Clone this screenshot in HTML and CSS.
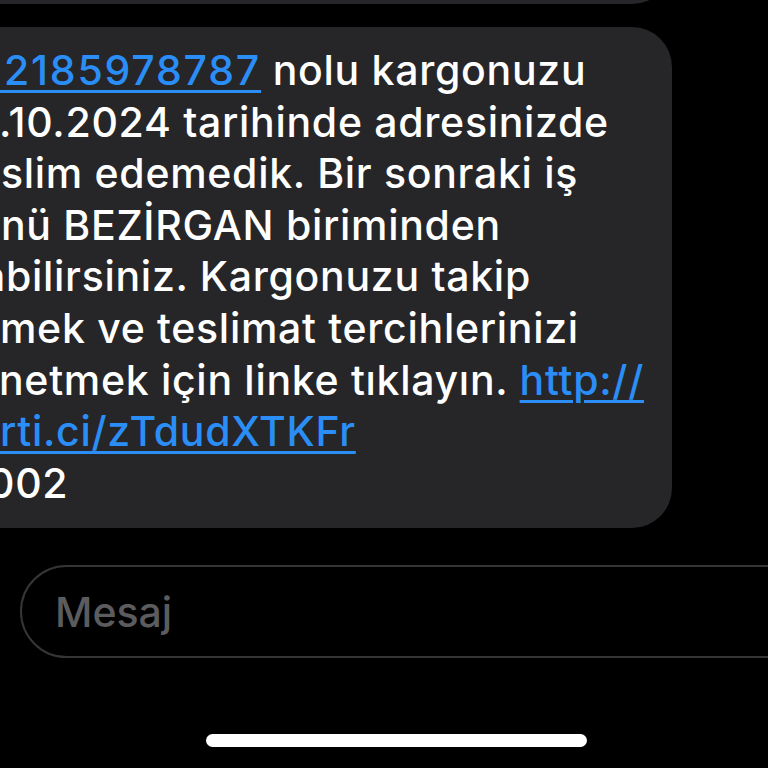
FILE: index.html
```html
<!DOCTYPE html>
<html lang="tr">
<head>
<meta charset="utf-8">
<title>Mesajlar</title>
<link rel="stylesheet" href="styles.css">
</head>
<body>
<div class="screen">
  <div class="prev-bubble"></div>
  <div class="bubble">
    <div class="line l1"><a class="link link-number" href="#">&thinsp;2185978787</a> nolu kargonuzu</div>
    <div class="line l2">.10.2024 tarihinde adresinizde</div>
    <div class="line l3">slim edemedik. Bir sonraki iş</div>
    <div class="line l4">nü BEZİRGAN biriminden</div>
    <div class="line l5">abilirsiniz. Kargonuzu takip</div>
    <div class="line l6">mek ve teslimat tercihlerinizi</div>
    <div class="line l7">netmek için linke tıklayın. <a class="link" href="#">http://</a></div>
    <div class="line l8"><a class="link" href="#">rti.ci/zTdudXTKFr</a></div>
    <div class="line l9">002</div>
  </div>
  <div class="composer">
    <span class="placeholder">Mesaj</span>
  </div>
  <div class="home-indicator"></div>
</div>
</body>
</html>
```
FILE: styles.css
```css
html, body {
  margin: 0;
  padding: 0;
  background: #000;
  width: 768px;
  height: 768px;
  overflow: hidden;
}

.screen {
  display: flex;
  flex-direction: column;
  align-items: flex-start;
  width: 768px;
  height: 768px;
  overflow: hidden;
  font-family: Inter, "Noto Sans", "Liberation Sans", sans-serif;
}

.prev-bubble {
  width: 672px;
  height: 44px;
  margin-top: -40px;
  background: #262628;
  border-radius: 0 0 40px 0;
  flex-shrink: 0;
}

.bubble {
  margin-top: 23px;
  width: 672px;
  height: 501px;
  box-sizing: border-box;
  padding-top: 18px;
  background: #262628;
  border-radius: 0 40px 40px 0;
  overflow: hidden;
  flex-shrink: 0;
  color: #fff;
  font-size: 41px;
  font-weight: 500;
  letter-spacing: 0.7px;
  line-height: 51.6px;
}

.line {
  white-space: nowrap;
}

.l1 { text-indent: -5px; }
.l2 { text-indent: -1px; }
.l3 { text-indent: 1px; }
.l4 { text-indent: 1px; }
.l5 { text-indent: -18px; }
.l6 { text-indent: 0; }
.l7 { text-indent: -1px; }
.l8 { text-indent: 0; }
.l9 { text-indent: -12px; }

.link {
  color: #2b8ef6;
  text-decoration: underline;
  text-decoration-thickness: 3px;
  text-underline-offset: 5px;
}

.link-number {
  letter-spacing: 1.8px;
}

.composer {
  margin-top: 37px;
  margin-left: 20px;
  width: 800px;
  height: 93px;
  box-sizing: border-box;
  border: 2px solid #353537;
  border-radius: 47px;
  display: flex;
  align-items: center;
  padding-left: 33px;
  flex-shrink: 0;
}

.placeholder {
  color: #5c5c5e;
  font-size: 41px;
  font-weight: 500;
}

.home-indicator {
  margin-top: 76px;
  margin-left: 206px;
  width: 381px;
  height: 13px;
  border-radius: 7px;
  background: #fff;
  flex-shrink: 0;
}
```
